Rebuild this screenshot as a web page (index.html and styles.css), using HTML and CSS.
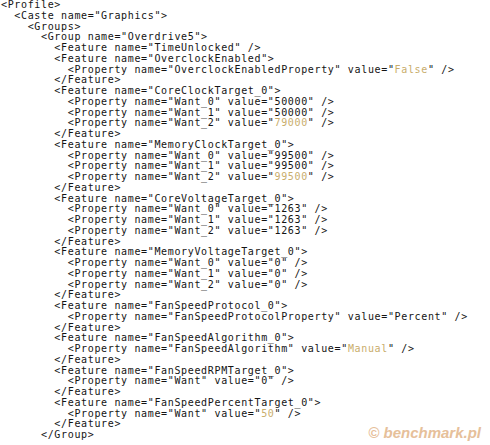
FILE: index.html
```html
<!DOCTYPE html>
<html>
<head>
<meta charset="utf-8">
<link rel="stylesheet" href="styles.css">
</head>
<body>
<div class="page">
<pre class="code">&lt;Profile&gt;
  &lt;Caste name="Graphics"&gt;
    &lt;Groups&gt;
      &lt;Group name="Overdrive5"&gt;
        &lt;Feature name="TimeUnlocked" /&gt;
        &lt;Feature name="OverclockEnabled"&gt;
          &lt;Property name="OverclockEnabledProperty" value="<span class="hl">False</span>" /&gt;
        &lt;/Feature&gt;
        &lt;Feature name="CoreClockTarget_0"&gt;
          &lt;Property name="Want_0" value="50000" /&gt;
          &lt;Property name="Want_1" value="50000" /&gt;
          &lt;Property name="Want_2" value="<span class="hl">79000</span>" /&gt;
        &lt;/Feature&gt;
        &lt;Feature name="MemoryClockTarget_0"&gt;
          &lt;Property name="Want_0" value="99500" /&gt;
          &lt;Property name="Want_1" value="99500" /&gt;
          &lt;Property name="Want_2" value="<span class="hl">99500</span>" /&gt;
        &lt;/Feature&gt;
        &lt;Feature name="CoreVoltageTarget_0"&gt;
          &lt;Property name="Want_0" value="1263" /&gt;
          &lt;Property name="Want_1" value="1263" /&gt;
          &lt;Property name="Want_2" value="1263" /&gt;
        &lt;/Feature&gt;
        &lt;Feature name="MemoryVoltageTarget_0"&gt;
          &lt;Property name="Want_0" value="0" /&gt;
          &lt;Property name="Want_1" value="0" /&gt;
          &lt;Property name="Want_2" value="0" /&gt;
        &lt;/Feature&gt;
        &lt;Feature name="FanSpeedProtocol_0"&gt;
          &lt;Property name="FanSpeedProtocolProperty" value="Percent" /&gt;
        &lt;/Feature&gt;
        &lt;Feature name="FanSpeedAlgorithm_0"&gt;
          &lt;Property name="FanSpeedAlgorithm" value="<span class="hl">Manual</span>" /&gt;
        &lt;/Feature&gt;
        &lt;Feature name="FanSpeedRPMTarget_0"&gt;
          &lt;Property name="Want" value="0" /&gt;
        &lt;/Feature&gt;
        &lt;Feature name="FanSpeedPercentTarget_0"&gt;
          &lt;Property name="Want" value="<span class="hl">50</span>" /&gt;
        &lt;/Feature&gt;
      &lt;/Group&gt;</pre>
<div class="mark">© benchmark.pl</div>
</div>
</body>
</html>
```
FILE: styles.css
```css
html, body {
  margin: 0;
  padding: 0;
  background: #ffffff;
}
.page {
  position: relative;
  width: 490px;
  height: 445px;
  overflow: hidden;
}
.code {
  margin: 0;
  padding: 0 0 0 1px;
  font-family: "DejaVu Sans Mono", monospace;
  font-size: 10px;
  letter-spacing: 0.65px;
  line-height: 10.75px;
  color: #141414;
  white-space: pre;
}
.hl {
  color: #c9ad6c;
}
.mark {
  position: absolute;
  right: 9px;
  bottom: 4px;
  font-family: "Liberation Sans", Arial, sans-serif;
  font-weight: bold;
  font-style: italic;
  font-size: 15px;
  color: #e6c09a;
}
```
